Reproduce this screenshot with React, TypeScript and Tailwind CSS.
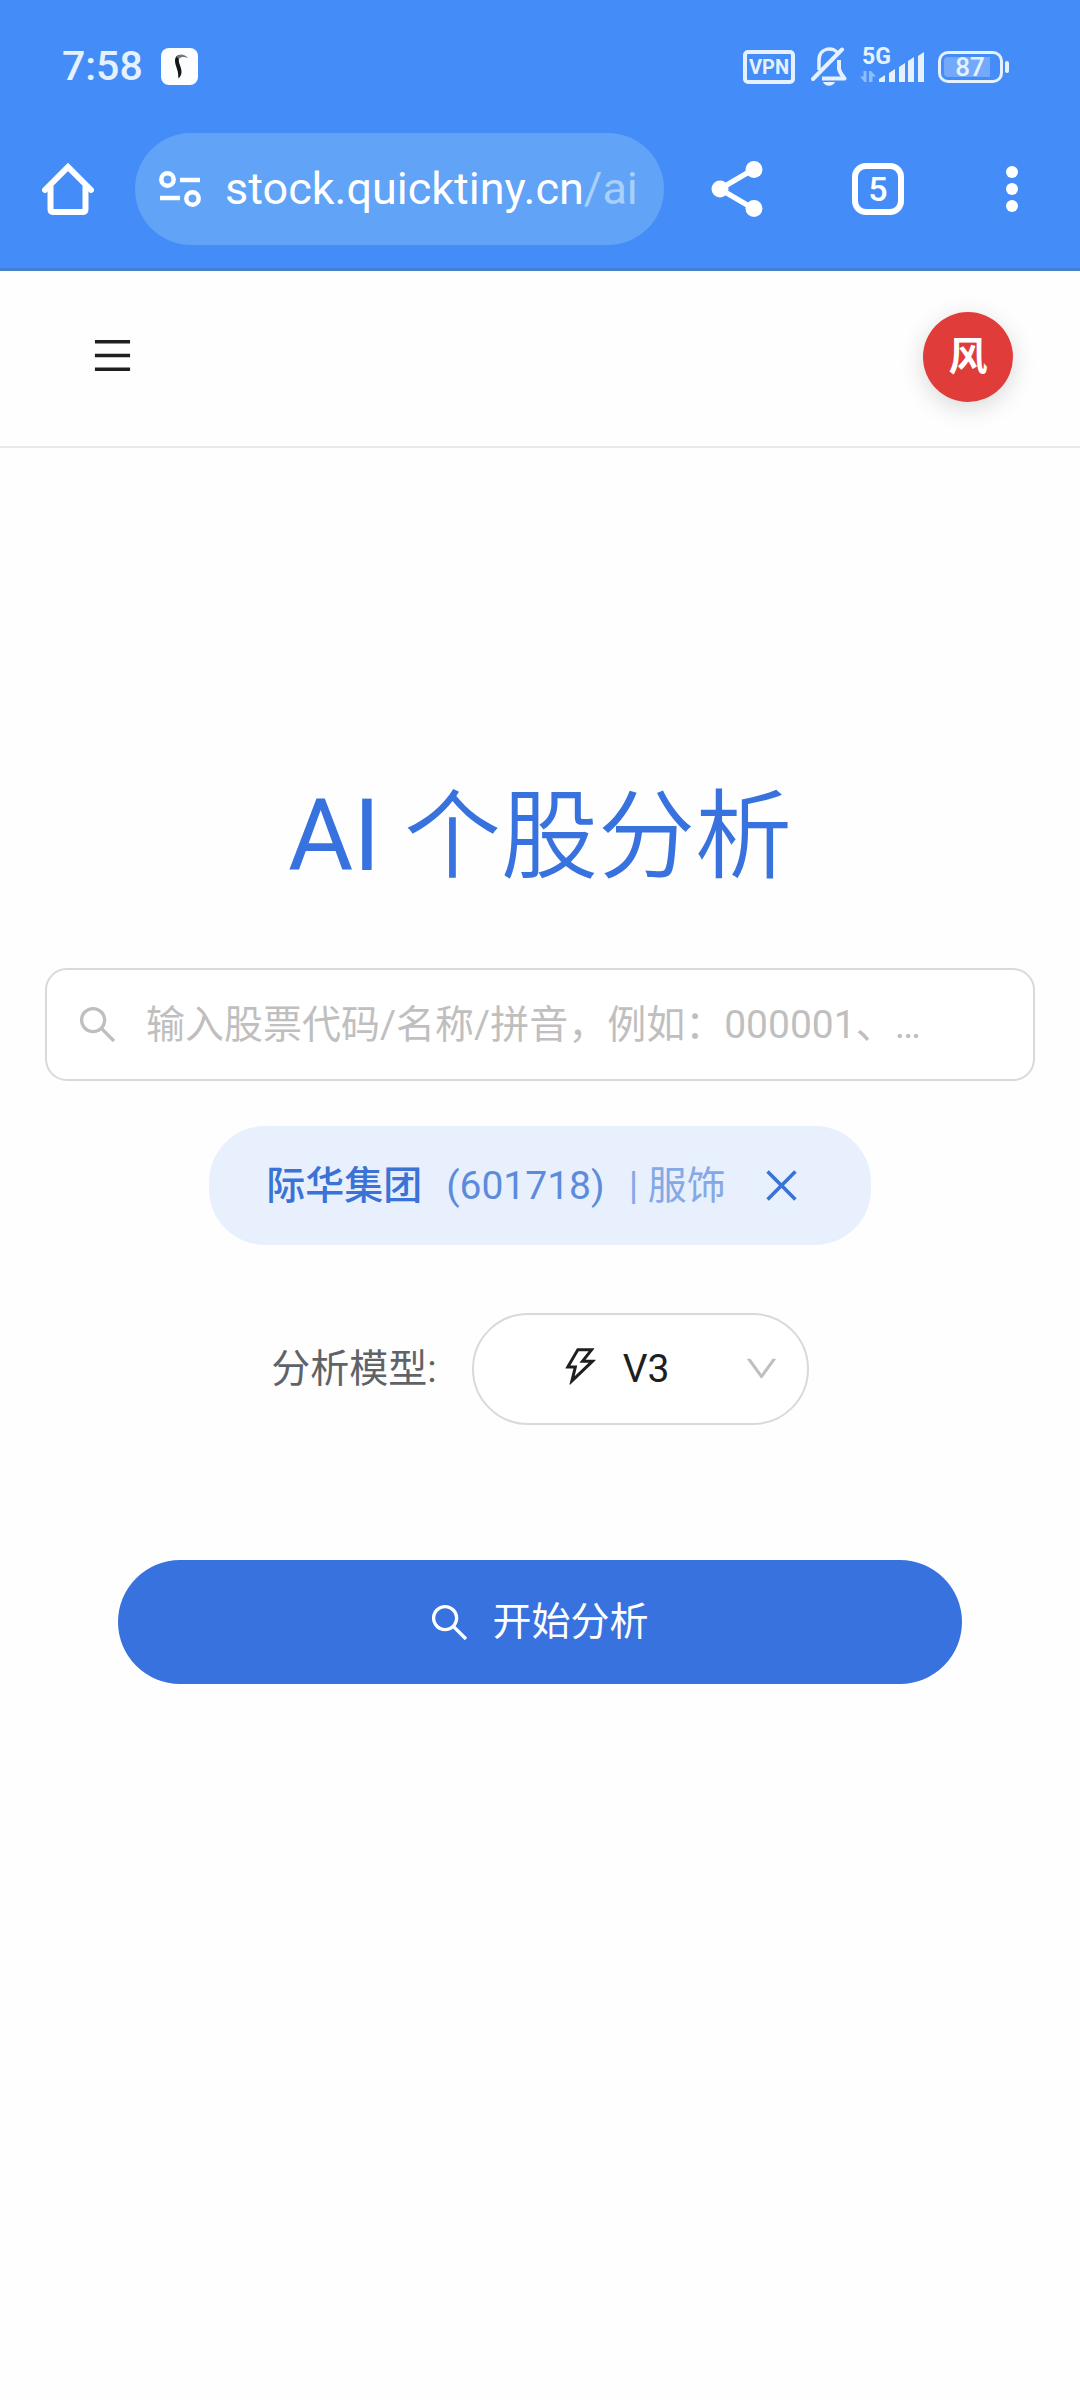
import { useState } from 'react';
import {
  AiOutlineClose,
  AiOutlineDown,
  AiOutlineMenu,
  AiOutlineSearch,
  AiOutlineThunderbolt,
} from 'react-icons/ai';

const StatusBar = () => (
  <div className="flex h-[133px] items-center justify-between pl-[62px] pr-[71px] text-[#e6f1ff]">
    <div className="flex items-center gap-[18px]">
      <span className="text-[41px] font-medium leading-none">7:58</span>
      <svg className="size-[37px]" viewBox="0 0 37 37" aria-hidden="true">
        <rect width="37" height="37" rx="8" fill="#fcfdfe" />
        <path d="M14 13C14 9 16 7 19 7C17.500 10 17.500 13 18.500 16C19.500 19 20.500 21 20.500 24C20.500 27 19 29 17.500 30.500C17 28 17.500 25 16 21C15 18 14 15 14 13Z" fill="#151515" />
        <path d="M15.500 9C18 5 24 6 27 10C23 8.500 20 8.500 18 11Z" fill="#777" />
      </svg>
    </div>

    <div className="flex items-center">
      <span className="flex h-[34px] w-[52px] items-center justify-center rounded-[5px] border-4 border-[#e6f1ff] text-[20px] font-bold leading-none">
        VPN
      </span>
      <svg className="ml-4 h-[39px] w-9" viewBox="0 0 36 39" fill="none" aria-hidden="true">
        <path d="M8 23V13C8 0 24 -1 27 7" stroke="currentColor" strokeWidth="3.500" />
        <path d="M2 32L31 2.500" stroke="currentColor" strokeWidth="4" strokeLinecap="round" />
        <path d="M28 13V21C28 25 31 28 33.500 31.500H11" stroke="currentColor" strokeWidth="4" strokeLinejoin="round" />
        <path d="M12 35H24C22 40 14 40 12 35Z" fill="currentColor" />
      </svg>
      <div className="relative ml-[13px] h-9 w-16">
        <span className="absolute left-0.5 top-0 text-[23px] font-bold leading-[16px]">5G</span>
        <svg className="h-9 w-16" viewBox="0 0 64 36" aria-hidden="true">
          <path d="M6.500 22V33H4.500L0 27.500H3.500V22ZM9 33V22H11L16 27.500H12.500V33Z" fill="#8fbcfb" />
          <g fill="currentColor">
            <path d="M19 33V30L25 26V33Z" />
            <path d="M29 33V24L35 20V33Z" />
            <path d="M39 33V18L45 14V33Z" />
            <path d="M48 33V12L54 8V33Z" />
            <path d="M58 33V7L64 3V33Z" />
          </g>
        </svg>
      </div>
      <div className="ml-3.5 flex items-center gap-0.5">
        <div className="flex h-8 w-[65px] rounded-[10px] border-3 border-[#e6f1ff] p-[3px]">
          <span className="flex w-[46px] items-center justify-center rounded-l-sm bg-[#73a9fa] pl-1.5 text-[26px] font-medium leading-none">
            87
          </span>
        </div>
        <div className="h-3 w-1 rounded-sm bg-[#e6f1ff]" />
      </div>
    </div>
  </div>
);

const BrowserBar = () => (
  <div className="flex items-center pb-[23px] pl-[42px] pr-[62px] text-white">
    <button type="button" aria-label="主页">
      <svg className="size-[52px]" viewBox="0 0 52 52" fill="none" stroke="currentColor" strokeWidth="6" aria-hidden="true">
        <path d="M3 27L26 4L49 27" strokeLinecap="round" />
        <path d="M8.500 23V46Q8.500 49 11.500 49H40.500Q43.500 49 43.500 46V23" />
      </svg>
    </button>
    <button
      type="button"
      className="ml-[41px] flex h-28 min-w-0 flex-1 items-center gap-6 rounded-full bg-[#60a3f7] pl-6 text-left"
    >
      <svg className="h-9 w-[42px] shrink-0" viewBox="0 0 42 36" fill="none" stroke="currentColor" strokeWidth="4.500" aria-hidden="true">
        <circle cx="8.500" cy="8.500" r="6.200" />
        <path d="M21 9H41M1 27H21" />
        <circle cx="33.500" cy="27.500" r="6.200" />
      </svg>
      <span className="truncate text-[45px] leading-[56px]">
        stock.quicktiny.cn<span className="text-[#a9d0fc]">/ai</span>
      </span>
    </button>
    <button type="button" aria-label="分享" className="ml-[47px]">
      <svg className="h-14 w-[52px]" viewBox="0 0 52 56" aria-hidden="true">
        <path d="M43 8L9 28L43 48" fill="none" stroke="currentColor" strokeWidth="5.500" />
        <circle cx="43" cy="8.500" r="8.500" fill="currentColor" />
        <circle cx="9" cy="28" r="8.500" fill="currentColor" />
        <circle cx="43" cy="47.500" r="8.500" fill="currentColor" />
      </svg>
    </button>
    <button
      type="button"
      aria-label="标签页 5"
      className="ml-[89px] flex size-[52px] items-center justify-center rounded-[14px] border-6 border-white text-[34px] font-medium leading-none"
    >
      5
    </button>
    <button type="button" aria-label="更多" className="ml-[102px]">
      <svg className="h-12 w-3" viewBox="0 0 12 48" fill="currentColor" aria-hidden="true">
        <circle cx="6" cy="7" r="6" />
        <circle cx="6" cy="24" r="6" />
        <circle cx="6" cy="41" r="6" />
      </svg>
    </button>
  </div>
);

const SiteHeader = () => (
  <header className="flex items-center justify-between border-b-2 border-[#e8e8ea] pb-11 pl-[90px] pr-[67px] pt-[41px]">
    <button type="button" aria-label="菜单" className="pb-1">
      <AiOutlineMenu className="size-[45px] text-[#1f1f1f]" />
    </button>
    <button
      type="button"
      className="size-[90px] rounded-full bg-[#e03c3a] text-[39px] font-semibold leading-none text-white shadow-[0_6px_24px_rgba(0,0,0,0.15)]"
    >
      风
    </button>
  </header>
);

function App() {
  const [keyword, setKeyword] = useState('');
  const [model, setModel] = useState('v3');
  const [stock, setStock] = useState<{ name: string; code: string; sector: string } | null>({
    name: '际华集团',
    code: '601718',
    sector: '服饰',
  });

  return (
    <div className="min-h-screen bg-[#fefefe] font-[Roboto,'Noto_Sans_CJK_SC',sans-serif] text-[39px] leading-[60px]">
      <div className="border-b-3 border-[#4580cf] bg-[#448df8]">
        <StatusBar />
        <BrowserBar />
      </div>

      <SiteHeader />

      <main className="flex flex-col items-center px-[45px] pt-[326px]">
        <h1 className="text-[100px] leading-[124px] text-[#3872de]">
          AI<span className="text-[97px] font-[350]"> 个股分析</span>
        </h1>

        <label className="mt-[69px] flex h-[113px] w-full items-center gap-[26px] rounded-[22px] border-2 border-[#d9d9d9] bg-white pl-7 pr-8">
          <AiOutlineSearch className="size-[45px] shrink-0 text-[#bfbfbf]" />
          <input
            type="text"
            aria-label="股票"
            value={keyword}
            onChange={(e) => setKeyword(e.target.value)}
            placeholder="输入股票代码/名称/拼音，例如：000001、…"
            className="min-w-0 flex-1 bg-transparent text-[#1f1f1f] outline-none placeholder:text-[#bfbfbf]"
          />
        </label>

        {stock && (
          <div className="mt-[45px] flex h-[119px] items-center rounded-[56px] bg-[#e8f0fd] pl-[57px] pr-[67px] text-[#3b72d5]">
            <span className="font-medium">{stock.name}</span>
            <span className="ml-6 text-[#5d8bdc]">({stock.code})</span>
            <span className="ml-6 text-[#85a8e6]">| {stock.sector}</span>
            <button type="button" aria-label="移除" onClick={() => setStock(null)} className="ml-[33px]">
              <AiOutlineClose className="size-[45px]" />
            </button>
          </div>
        )}

        <div className="mt-[68px] flex items-center gap-[35px]">
          <label htmlFor="model" className="text-[#5f6368]">
            分析模型:
          </label>
          <div className="relative">
            <select
              id="model"
              value={model}
              onChange={(e) => setModel(e.target.value)}
              className="h-28 w-[337px] appearance-none rounded-full border-2 border-[#d9d9d9] bg-white pl-[149px] text-[#1f1f1f] outline-none"
            >
              <option value="v3">V3</option>
            </select>
            <AiOutlineThunderbolt className="pointer-events-none absolute left-[86px] top-[31px] size-[45px] text-[#1f1f1f]" />
            <AiOutlineDown className="pointer-events-none absolute right-7 top-9 size-[39px] text-[#bfbfbf]" />
          </div>
        </div>

        <div className="mt-[135px] w-full px-[73px]">
          <button
            type="button"
            className="flex h-[124px] w-full items-center justify-center gap-5 rounded-full bg-[#3872de] pr-1 text-white"
          >
            <AiOutlineSearch className="size-[45px]" />
            开始分析
          </button>
        </div>
      </main>
    </div>
  );
}

export default App;
